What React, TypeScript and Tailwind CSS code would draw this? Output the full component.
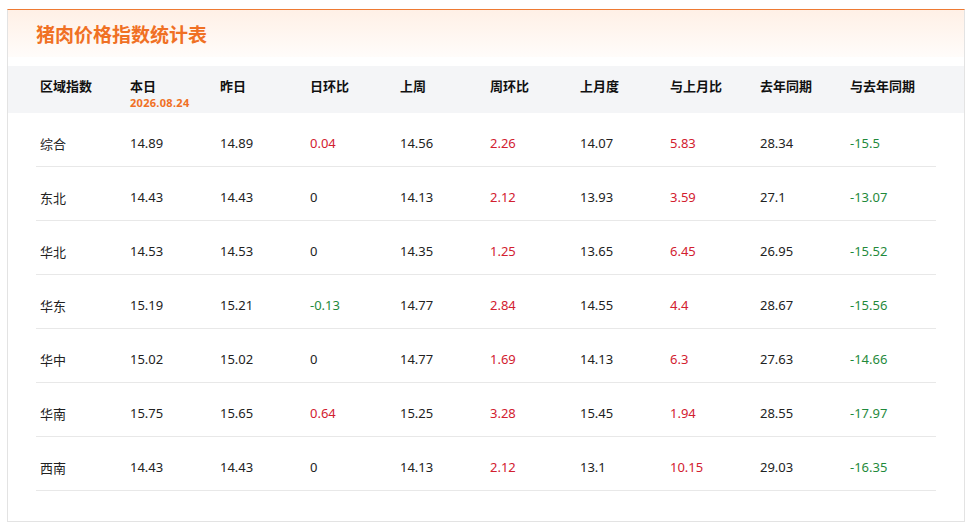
import React from 'react'

type Row = {
  region: string
  today: string
  yesterday: string
  dayRatio: string
  lastWeek: string
  weekRatio: string
  lastMonth: string
  monthRatio: string
  lastYear: string
  yearRatio: string
}

const rows: Row[] = [
  { region: '综合', today: '14.89', yesterday: '14.89', dayRatio: '0.04', lastWeek: '14.56', weekRatio: '2.26', lastMonth: '14.07', monthRatio: '5.83', lastYear: '28.34', yearRatio: '-15.5' },
  { region: '东北', today: '14.43', yesterday: '14.43', dayRatio: '0', lastWeek: '14.13', weekRatio: '2.12', lastMonth: '13.93', monthRatio: '3.59', lastYear: '27.1', yearRatio: '-13.07' },
  { region: '华北', today: '14.53', yesterday: '14.53', dayRatio: '0', lastWeek: '14.35', weekRatio: '1.25', lastMonth: '13.65', monthRatio: '6.45', lastYear: '26.95', yearRatio: '-15.52' },
  { region: '华东', today: '15.19', yesterday: '15.21', dayRatio: '-0.13', lastWeek: '14.77', weekRatio: '2.84', lastMonth: '14.55', monthRatio: '4.4', lastYear: '28.67', yearRatio: '-15.56' },
  { region: '华中', today: '15.02', yesterday: '15.02', dayRatio: '0', lastWeek: '14.77', weekRatio: '1.69', lastMonth: '14.13', monthRatio: '6.3', lastYear: '27.63', yearRatio: '-14.66' },
  { region: '华南', today: '15.75', yesterday: '15.65', dayRatio: '0.64', lastWeek: '15.25', weekRatio: '3.28', lastMonth: '15.45', monthRatio: '1.94', lastYear: '28.55', yearRatio: '-17.97' },
  { region: '西南', today: '14.43', yesterday: '14.43', dayRatio: '0', lastWeek: '14.13', weekRatio: '2.12', lastMonth: '13.1', monthRatio: '10.15', lastYear: '29.03', yearRatio: '-16.35' },
]

const headers = ['区域指数', '本日', '昨日', '日环比', '上周', '周环比', '上月度', '与上月比', '去年同期', '与去年同期']

// 涨红跌绿, 0 保持默认色
function ratioColor(v: string): string {
  const n = parseFloat(v)
  if (n > 0) return 'text-[#d2202f]'
  if (n < 0) return 'text-[#1f8a3c]'
  return 'text-[#222]'
}

function Cell({ children, className = '' }: { children: React.ReactNode; className?: string }) {
  return <div className={`w-[90px] shrink-0 px-1 ${className}`}>{children}</div>
}

export default function App() {
  return (
    <div className="bg-white w-[973px] h-[531px] pt-[9px] px-[7px]"
      style={{ fontFamily: '"Noto Sans", "Noto Sans CJK SC", sans-serif' }}>
      <div className="w-[958px] h-[513px] border border-[#e3e3e3] border-t-[#ee7a33] bg-white">

        {/* 标题 */}
        <div className="h-[47px] flex items-center pl-[28px] bg-gradient-to-b from-[#fff0e6] to-[#fffcfa]">
          <h1 className="text-[19px] font-bold text-[#f07024] leading-none"
            style={{ fontFamily: '"Noto Sans CJK SC", sans-serif' }}>
            猪肉价格指数统计表
          </h1>
        </div>

        {/* 表头 */}
        <div className="mt-[9px] h-[47px] bg-[#f4f5f7] pl-[28px] flex">
          {headers.map((h, i) => (
            <Cell key={h} className="pt-[10px]">
              <div className="text-[13px] font-bold text-[#111] leading-[19px]"
                style={{ fontFamily: '"Noto Sans CJK SC", sans-serif' }}>{h}</div>
              {i === 1 && (
                <div className="text-[11px] font-bold text-[#f07024] leading-[15px] tracking-[0.3px]">
                  2026.08.24
                </div>
              )}
            </Cell>
          ))}
        </div>

        {/* 数据 */}
        <div className="ml-[28px] w-[900px]">
          {rows.map((r) => (
            <div key={r.region} className="h-[54px] flex items-center border-b border-[#e8e8e8] text-[13px] text-[#222] pt-[9px]">
              <Cell><span style={{ fontFamily: '"Noto Sans CJK SC", sans-serif' }}>{r.region}</span></Cell>
              <Cell>{r.today}</Cell>
              <Cell>{r.yesterday}</Cell>
              <Cell className={ratioColor(r.dayRatio)}>{r.dayRatio}</Cell>
              <Cell>{r.lastWeek}</Cell>
              <Cell className={ratioColor(r.weekRatio)}>{r.weekRatio}</Cell>
              <Cell>{r.lastMonth}</Cell>
              <Cell className={ratioColor(r.monthRatio)}>{r.monthRatio}</Cell>
              <Cell>{r.lastYear}</Cell>
              <Cell className={ratioColor(r.yearRatio)}>{r.yearRatio}</Cell>
            </div>
          ))}
        </div>
      </div>
    </div>
  )
}
